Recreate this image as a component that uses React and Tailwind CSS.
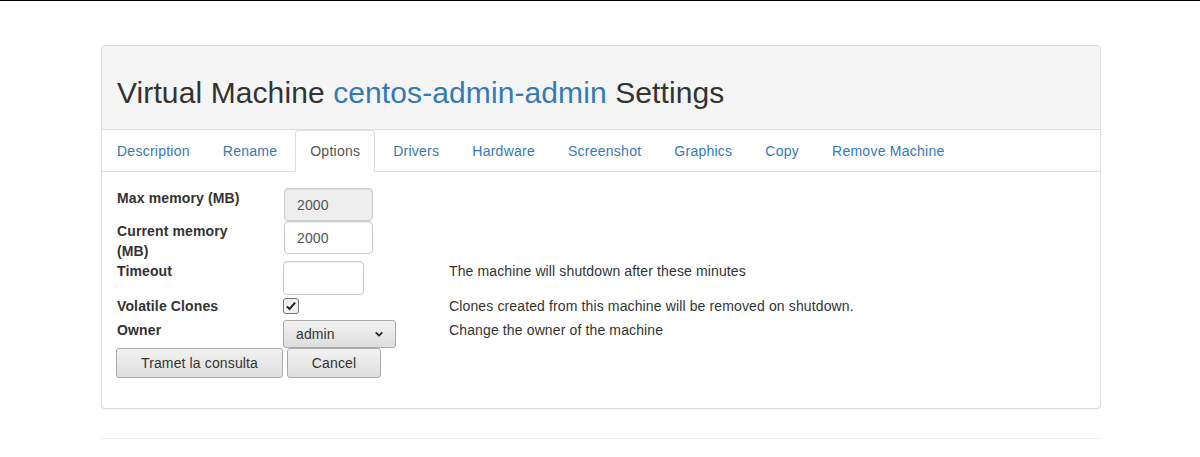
import React from 'react'

const tabs = ['Description', 'Rename', 'Options', 'Drivers', 'Hardware', 'Screenshot', 'Graphics', 'Copy', 'Remove Machine']

const inputBase =
  'h-[33px] rounded-[4px] border border-[#ccc] px-[12px] text-[14px] text-[#555] shadow-[inset_0_1px_1px_rgba(0,0,0,0.075)] outline-none'

const Row = ({ label, children, note, className = '' }) => (
  <div className={`flex ${className}`}>
    <div className="w-[167px] shrink-0 font-bold leading-[20px] text-[#333]">{label}</div>
    <div className="w-[165px] shrink-0">{children}</div>
    {note && <div className="leading-[20px] text-[#333]">{note}</div>}
  </div>
)

const Checkbox = () => (
  <span className="mt-[2px] flex h-[16px] w-[16px] items-center justify-center rounded-[3px] border border-[#767676] bg-[#f0f0f0]">
    <svg viewBox="0 0 16 16" className="h-[12px] w-[12px]">
      <path d="M2.5 8.5 L6 12 L13.5 3.5" fill="none" stroke="#222" strokeWidth="2.6" />
    </svg>
  </span>
)

const App = () => {
  return (
    <div className="min-h-[457px] border-t border-black bg-white font-['Liberation_Sans',Arial,sans-serif] text-[14px] tracking-[0.13px] text-[#333]">
      <div className="ml-[101px] w-[1000px] pt-[44px]">
        {/* Panel */}
        <div className="rounded-[4px] border border-[#ddd] bg-white shadow-[0_1px_1px_rgba(0,0,0,0.05)]">
          <div className="rounded-t-[3px] border-b border-[#ddd] bg-[#f5f5f5] px-[15px] py-[10px]">
            <h1 className="mb-[10px] mt-[20px] text-[30px] leading-[33px] tracking-[0.1px] text-[#333]">
              Virtual Machine <span className="text-[#337ab7]">centos-admin-admin</span> Settings
            </h1>
          </div>

          {/* Tabs */}
          <ul className="flex border-b border-[#ddd]">
            {tabs.map((t) => (
              <li key={t} className="-mb-[1px] mr-[3px]">
                <span
                  className={
                    t === 'Options'
                      ? 'block rounded-t-[4px] border border-[#ddd] border-b-white bg-white px-[14px] py-[10px] leading-[20px] tracking-[0.25px] text-[#555]'
                      : 'block border border-transparent px-[14px] py-[10px] leading-[20px] tracking-[0.25px] text-[#337ab7]'
                  }
                >
                  {t}
                </span>
              </li>
            ))}
          </ul>

          {/* Form */}
          <div className="px-[15px] pb-[30px] pt-[16px]">
            <Row label="Max memory (MB)" className="h-[33px]">
              <input className={`${inputBase} w-[89px] bg-[#eee]`} value="2000" disabled readOnly />
            </Row>
            <Row label={<>Current memory<br />(MB)</>} className="h-[40px]">
              <input className={`${inputBase} w-[89px] bg-white`} value="2000" readOnly />
            </Row>
            <Row label="Timeout" note="The machine will shutdown after these minutes" className="h-[35px]">
              <input className={`${inputBase} -ml-[1px] h-[34px] w-[81px] bg-white`} readOnly />
            </Row>
            <Row label="Volatile Clones" note="Clones created from this machine will be removed on shutdown." className="h-[24px]">
              <div className="-ml-[1px]">
                <Checkbox />
              </div>
            </Row>
            <Row label="Owner" note="Change the owner of the machine" className="h-[28px]">
              <div className="-ml-[1px] flex h-[28px] w-[113px] items-center justify-between rounded-[3px] border border-[#aaa] bg-gradient-to-b from-[#f2f2f2] to-[#dedede] pl-[12px] pr-[11px] text-[#333]">
                <span>admin</span>
                <svg viewBox="0 0 12 12" className="h-[10px] w-[10px]">
                  <path d="M2 4 L6 8 L10 4" fill="none" stroke="#222" strokeWidth="2" />
                </svg>
              </div>
            </Row>
            <div className="-ml-[1px] flex gap-[4px]">
              <button className="h-[30px] w-[167px] rounded-[3px] border border-[#aaa] bg-gradient-to-b from-[#f2f2f2] to-[#dedede] text-[#333]">
                Tramet la consulta
              </button>
              <button className="h-[30px] w-[94px] rounded-[3px] border border-[#aaa] bg-gradient-to-b from-[#f2f2f2] to-[#dedede] text-[#333]">
                Cancel
              </button>
            </div>
          </div>
        </div>

        <hr className="mt-[29px] border-t border-[#eee]" />
      </div>
    </div>
  )
}

export default App
